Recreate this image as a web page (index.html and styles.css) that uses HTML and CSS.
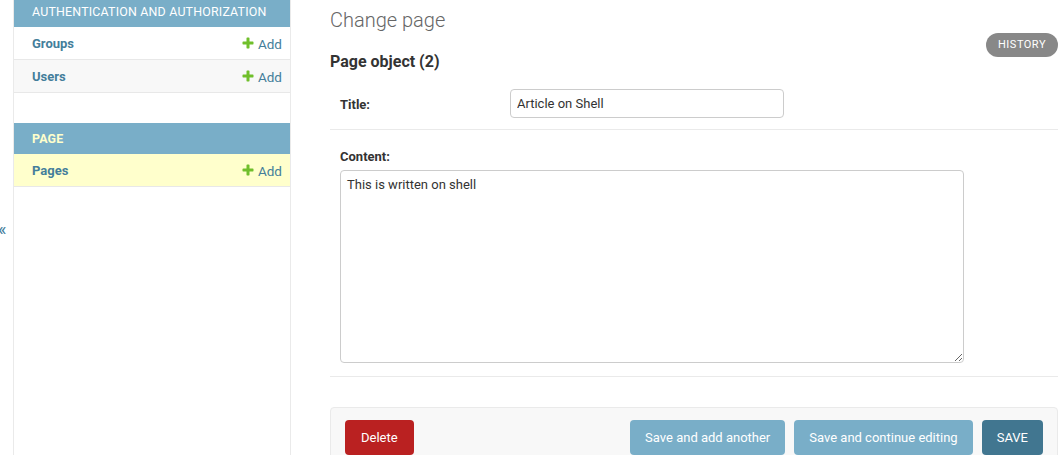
FILE: index.html
```html
<!DOCTYPE html>
<html>
<head>
<meta charset="utf-8">
<link rel="stylesheet" href="styles.css">
</head>
<body>
<div class="layout">
  <div class="toggle"><span class="toggle-glyph">«</span></div>
  <nav class="sidebar">
    <div class="module">
      <div class="caption caption-first">Authentication and Authorization</div>
      <div class="row">
        <a class="model">Groups</a>
        <a class="add"><svg class="plus" viewBox="0 0 1792 1792"><path d="M1600 796v192q0 40-28 68t-68 28h-416v416q0 40-28 68t-68 28h-192q-40 0-68-28t-28-68v-416h-416q-40 0-68-28t-28-68v-192q0-40 28-68t68-28h416v-416q0-40 28-68t68-28h192q40 0 68 28t28 68v416h416q40 0 68 28t28 68z"/></svg>Add</a>
      </div>
      <div class="row alt">
        <a class="model">Users</a>
        <a class="add"><svg class="plus" viewBox="0 0 1792 1792"><path d="M1600 796v192q0 40-28 68t-68 28h-416v416q0 40-28 68t-68 28h-192q-40 0-68-28t-28-68v-416h-416q-40 0-68-28t-28-68v-192q0-40 28-68t68-28h416v-416q0-40 28-68t68-28h192q40 0 68 28t28 68v416h416q40 0 68 28t28 68z"/></svg>Add</a>
      </div>
    </div>
    <div class="module">
      <div class="caption current">Page</div>
      <div class="row selected">
        <a class="model">Pages</a>
        <a class="add"><svg class="plus" viewBox="0 0 1792 1792"><path d="M1600 796v192q0 40-28 68t-68 28h-416v416q0 40-28 68t-68 28h-192q-40 0-68-28t-28-68v-416h-416q-40 0-68-28t-28-68v-192q0-40 28-68t68-28h416v-416q0-40 28-68t68-28h192q40 0 68 28t28 68v416h416q40 0 68 28t28 68z"/></svg>Add</a>
      </div>
    </div>
  </nav>
  <main class="content">
    <h1 class="title">Change page</h1>
    <div class="tools"><a class="history">History</a></div>
    <h2 class="subtitle">Page object (2)</h2>
    <div class="fieldset">
      <div class="form-row inline">
        <label class="label">Title:</label>
        <input class="text-input" type="text" value="Article on Shell">
      </div>
      <div class="form-row stacked">
        <label class="label label-stacked">Content:</label>
        <textarea class="textarea">This is written on shell</textarea>
      </div>
    </div>
    <div class="submit-row">
      <a class="btn delete">Delete</a>
      <div class="spacer"></div>
      <a class="btn light">Save and add another</a>
      <a class="btn light">Save and continue editing</a>
      <a class="btn primary">SAVE</a>
    </div>
  </main>
</div>
</body>
</html>
```

FILE: styles.css
```css
* { box-sizing: border-box; }
html, body { margin: 0; padding: 0; }
body {
  font-family: Roboto, "Liberation Sans", sans-serif;
  font-size: 13px;
  color: #333;
  background: #fff;
  width: 1064px;
  height: 455px;
  overflow: hidden;
}
.layout {
  display: flex;
  height: 455px;
}
.toggle {
  width: 14px;
  flex: none;
  border-right: 1px solid #eaeaea;
  display: flex;
  flex-direction: column;
  justify-content: center;
  padding-top: 3px;
}
.toggle-glyph {
  color: #447e9b;
  font-size: 18px;
  line-height: 20px;
  margin-left: -2px;
}
.sidebar {
  width: 277px;
  flex: none;
  border-right: 1px solid #eaeaea;
}
.module { margin-bottom: 30px; }
.caption {
  background: #79aec8;
  color: #fff;
  text-transform: uppercase;
  letter-spacing: 0.2px;
  font-size: 12.4px;
  line-height: 15px;
  padding: 8px 18px;
  white-space: nowrap;
}
.caption-first { padding-top: 4px; height: 27px; }
.caption.current { color: #ffc; font-weight: 700; }
.row {
  display: flex;
  justify-content: space-between;
  align-items: center;
  height: 33px;
  padding: 1px 8px 0 18px;
  border-bottom: 1px solid #e8e8e8;
  background: #fff;
}
.row.alt { background: #f8f8f8; }
.row.selected { background: #ffc; }
.model { color: #447e9b; font-weight: 700; }
.add { color: #447e9b; display: flex; align-items: center; font-size: 13.5px; }
.plus { width: 14px; height: 14px; fill: #70bf2b; margin-right: 3px; margin-top: -1px; }

.content {
  flex: 1;
  padding: 8px 6px 0 39px;
}
.title {
  margin: 0;
  font-size: 20px;
  line-height: 24px;
  font-weight: 300;
  color: #666;
}
.tools { float: right; margin-top: 1px; }
.history {
  display: block;
  background: #888;
  color: #fff;
  font-size: 11px;
  letter-spacing: 0.5px;
  text-transform: uppercase;
  line-height: 24px;
  height: 24px;
  padding: 0 12px;
  border-radius: 12px;
}
.subtitle {
  margin: 20px 0 7px;
  font-size: 16px;
  line-height: 20px;
  font-weight: 700;
  color: #333;
}
.form-row {
  border-bottom: 1px solid #eaeaea;
  padding: 10px 10px 11px;
}
.form-row.inline { display: flex; align-items: center; }
.label { font-weight: 700; color: #333; line-height: 16px; }
.inline .label { width: 170px; flex: none; padding-top: 2px; }
.label-stacked { display: block; padding-top: 9px; margin-bottom: 5px; }
.form-row.stacked { padding-bottom: 13px; }
.text-input {
  width: 274px;
  height: 29px;
  border: 1px solid #ccc;
  border-radius: 4px;
  padding: 5px 6px;
  font-family: inherit;
  font-size: 13px;
  color: #333;
  outline: none;
}
.textarea {
  display: block;
  width: 624px;
  height: 193px;
  border: 1px solid #ccc;
  border-radius: 4px;
  padding: 5px 6px;
  font-family: inherit;
  font-size: 13px;
  line-height: 18px;
  color: #333;
  margin: 0;
}
.submit-row {
  margin-top: 30px;
  display: flex;
  gap: 9px;
  padding: 12px 14px;
  background: #f8f8f8;
  border: 1px solid #eaeaea;
  border-radius: 4px;
}
.spacer { flex: 1; }
.btn {
  display: block;
  height: 35px;
  line-height: 35px;
  padding: 0 15px;
  border-radius: 4px;
  color: #fff;
  font-size: 13px;
}
.delete { background: #ba2121; padding: 0 16px; }
.light { background: #79aec8; }
.primary { background: #417690; }
```
